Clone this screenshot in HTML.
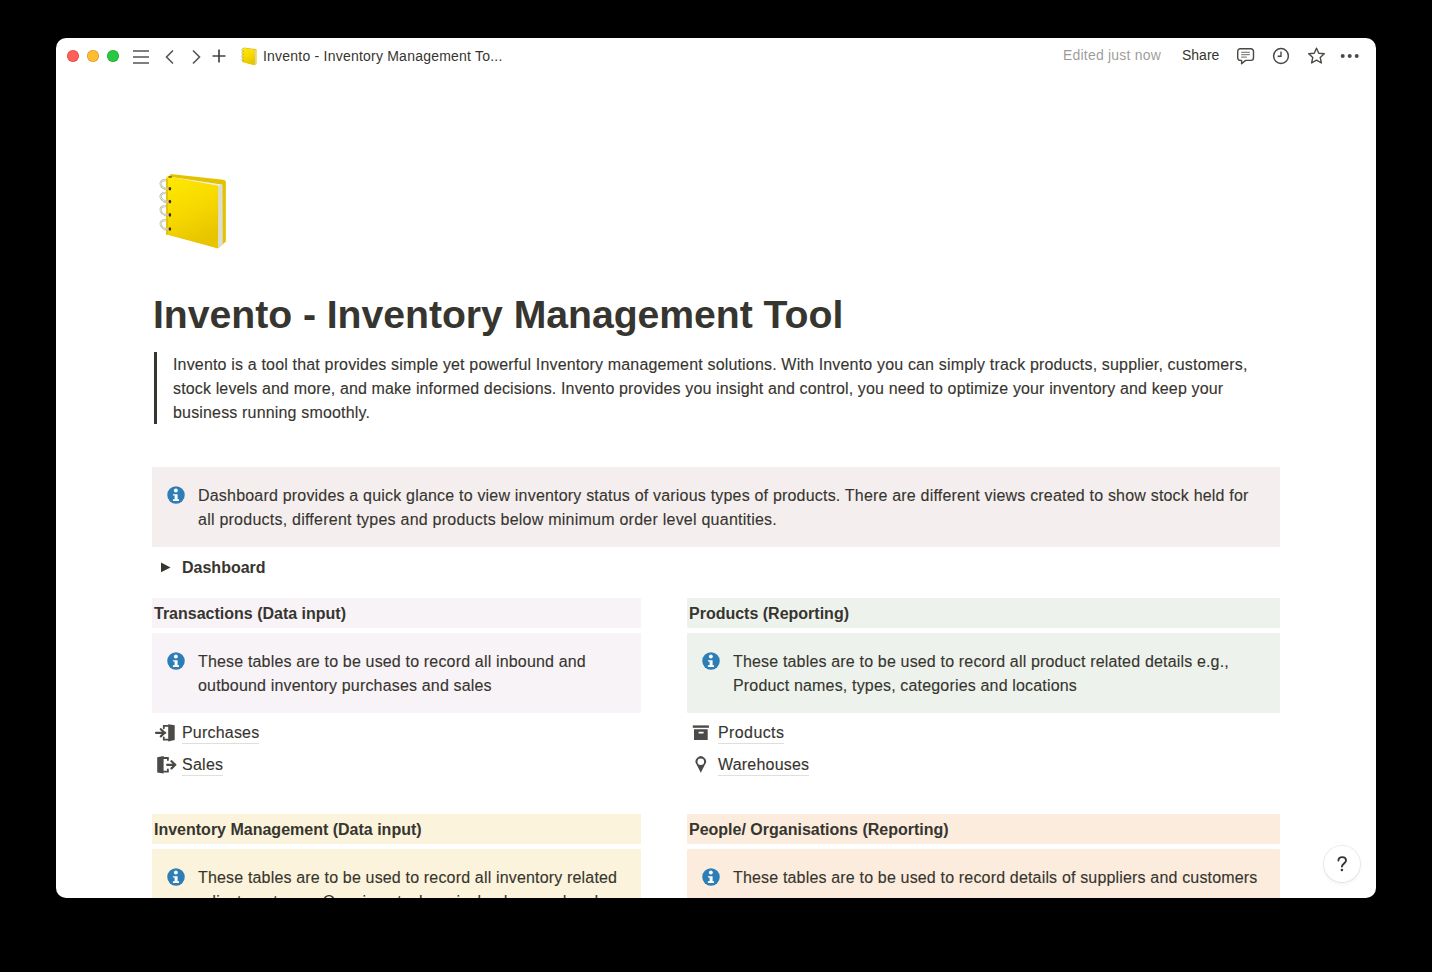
<!DOCTYPE html>
<html><head><meta charset="utf-8">
<style>
*{box-sizing:border-box;margin:0;padding:0}
html,body{width:1432px;height:972px;background:#000;overflow:hidden}
body{font-family:"Liberation Sans",sans-serif;color:rgb(55,53,47);position:relative}
.t16:not(.hd){-webkit-text-stroke:0.12px rgb(55,53,47)}
#win{position:absolute;left:56px;top:38px;width:1320px;height:860px;background:#fff;border-radius:10px;overflow:hidden}
.abs{position:absolute;white-space:nowrap}
.tl{position:absolute;top:12px;width:12px;height:12px;border-radius:50%;box-shadow:inset 0 0 0 0.6px rgba(0,0,0,0.22)}
.t16{font-size:16px;line-height:24px;letter-spacing:0.17px;padding-top:1px}
.hd{letter-spacing:0 !important}
.hd{font-weight:bold}
.callout{position:absolute;border-radius:1px}
.info{position:absolute;width:18px;height:18px}
.link{border-bottom:1px solid rgba(55,53,47,0.16);padding-bottom:2px}
</style></head>
<body>
<div id="win">
  <!-- top bar -->
  <div class="tl" style="left:11px;background:#ff5f57"></div>
  <div class="tl" style="left:31px;background:#febc2e"></div>
  <div class="tl" style="left:51px;background:#28c840"></div>
  <svg class="abs" style="left:76px;top:11px" width="20" height="16" viewBox="0 0 20 16">
    <path d="M1 2h16M1 8h16M1 14h16" stroke="#555" stroke-width="1.6" fill="none"/>
  </svg>
  <svg class="abs" style="left:107px;top:11px" width="14" height="16" viewBox="0 0 14 16">
    <path d="M10 1.5L3.5 8L10 14.5" stroke="#555" stroke-width="1.6" fill="none"/>
  </svg>
  <svg class="abs" style="left:133px;top:11px" width="14" height="16" viewBox="0 0 14 16">
    <path d="M4 1.5L10.5 8L4 14.5" stroke="#555" stroke-width="1.6" fill="none"/>
  </svg>
  <svg class="abs" style="left:155px;top:10px" width="16" height="16" viewBox="0 0 16 16">
    <path d="M8 1.5v13M1.5 8h13" stroke="#444" stroke-width="1.7" fill="none"/>
  </svg>
  <svg viewBox="0 0 80 86" width="19" height="20.8" class="abs" style="left:182.9px;top:8.3px">
<defs>
<linearGradient id="fck1" x1="0" y1="0" x2="0.35" y2="1"><stop offset="0" stop-color="#ffe900"/><stop offset="0.55" stop-color="#f7d900"/><stop offset="1" stop-color="#e8c500"/></linearGradient>
</defs>
<path d="M18.4 6 L71.5 11.8 Q73.9 12.1 73.9 14.5 L73.9 73.5 L66 80.5 L14.5 66 Z" fill="#e5c200"/>
<polygon points="17.7,8.8 70.5,16.8 70.8,76 66,80 66,18" fill="#d9ddd6"/>
<polygon points="17.7,8.8 70.5,16.8 66.2,17.9 16,9.6" fill="#eef0ea"/>
<path d="M16.4 8.4 L66.2 17.7 L66 80 L14.2 66.4 L14.2 10.6 Q14.2 8.1 16.4 8.4 Z" fill="url(#fck1)"/>
<path d="M14.2 10.6 L15.8 10.6 L15.8 66.8 L14.2 66.4 Z" fill="#e3bc00"/>
<ellipse cx="18.1" cy="8.9" rx="2" ry="1.1" fill="#6b5a10" opacity="0.8"/>
<g fill="none" stroke-linecap="round"><path d="M17.2 20.8 C8.5 22.0 5 12.3 13.4 12.0" stroke="#b8c0a6" stroke-width="2.3"/><path d="M17.2 33.6 C8.5 34.800000000000004 5 25.1 13.4 24.8" stroke="#b8c0a6" stroke-width="2.3"/><path d="M17.2 46.9 C8.5 48.1 5 38.4 13.4 38.099999999999994" stroke="#b8c0a6" stroke-width="2.3"/><path d="M17.2 61.0 C8.5 62.2 5 52.5 13.4 52.2" stroke="#b8c0a6" stroke-width="2.3"/><path d="M17.2 20.8 C8.5 22.0 5 12.3 13.4 12.0" stroke="#eef1e6" stroke-width="0.9"/><path d="M17.2 33.6 C8.5 34.800000000000004 5 25.1 13.4 24.8" stroke="#eef1e6" stroke-width="0.9"/><path d="M17.2 46.9 C8.5 48.1 5 38.4 13.4 38.099999999999994" stroke="#eef1e6" stroke-width="0.9"/><path d="M17.2 61.0 C8.5 62.2 5 52.5 13.4 52.2" stroke="#eef1e6" stroke-width="0.9"/><path d="M12.8 21.400000000000002 L17.6 20.8" stroke="#d9c48a" stroke-width="1.6"/><path d="M12.8 34.2 L17.6 33.6" stroke="#d9c48a" stroke-width="1.6"/><path d="M12.8 47.5 L17.6 46.9" stroke="#d9c48a" stroke-width="1.6"/><path d="M12.8 61.6 L17.6 61.0" stroke="#d9c48a" stroke-width="1.6"/></g>
<ellipse cx="17.9" cy="20.8" rx="1.3" ry="1.8" fill="#3a3110"/><ellipse cx="17.9" cy="33.6" rx="1.3" ry="1.8" fill="#3a3110"/><ellipse cx="17.9" cy="46.9" rx="1.3" ry="1.8" fill="#3a3110"/><ellipse cx="17.9" cy="61.0" rx="1.3" ry="1.8" fill="#3a3110"/>
</svg>
  <div class="abs" style="left:207px;top:9px;font-size:14px;line-height:18px;letter-spacing:0.22px;color:rgb(55,53,47)">Invento - Inventory Management To...</div>
  <div class="abs" style="left:1007px;top:8px;font-size:14px;line-height:18px;letter-spacing:0.2px;color:rgba(55,53,47,0.5)">Edited just now</div>
  <div class="abs" style="left:1126px;top:8px;font-size:14px;line-height:18px;color:rgb(55,53,47)">Share</div>


  <svg class="abs" style="left:1181px;top:10px" width="18" height="17" viewBox="0 0 18 17">
    <path d="M3.3 0.8h10.6a2.6 2.6 0 0 1 2.6 2.6v6.4a2.6 2.6 0 0 1-2.6 2.6H8.6L4.6 15.7V12.4H3.3A2.6 2.6 0 0 1 0.7 9.8V3.4A2.6 2.6 0 0 1 3.3 0.8Z" fill="none" stroke="#4a4945" stroke-width="1.4" stroke-linejoin="round"/>
    <path d="M4.2 4.3h8.6M4.2 6.7h8.6M4.2 9.1h5.6" stroke="#6a6965" stroke-width="1"/>
  </svg>
  <svg class="abs" style="left:1216px;top:9px" width="18" height="18" viewBox="0 0 18 18">
    <circle cx="9" cy="9" r="7.4" fill="none" stroke="#4a4945" stroke-width="1.5"/>
    <path d="M9 4.6V9.2H5.6" fill="none" stroke="#4a4945" stroke-width="1.4"/>
  </svg>
  <svg class="abs" style="left:1251px;top:9px" width="19" height="18" viewBox="0 0 19 18">
    <path d="M9.5 1.2L11.8 6.3L17.3 6.8L13.2 10.5L14.4 16L9.5 13.2L4.6 16L5.8 10.5L1.7 6.8L7.2 6.3Z" fill="none" stroke="#4a4945" stroke-width="1.4" stroke-linejoin="round"/>
  </svg>
  <svg class="abs" style="left:1284px;top:14px" width="20" height="8" viewBox="0 0 20 8">
    <circle cx="2.7" cy="4" r="2" fill="#4a4945"/><circle cx="9.7" cy="4" r="2" fill="#4a4945"/><circle cx="16.7" cy="4" r="2" fill="#4a4945"/>
  </svg>
  <div class="abs" style="left:1268px;top:808px;width:36px;height:36px;border-radius:50%;background:#fff;box-shadow:0 0 0 1px rgba(15,15,15,0.07),0 2px 4px rgba(15,15,15,0.06)"><svg width="37" height="37" viewBox="0 0 37 37" style="position:absolute;left:0;top:0"><path d="M14.4 14.6C14.4 12.5 16 11.1 18.1 11.1C20.3 11.1 22 12.5 22 14.5C22 17.1 18.5 17.8 17.9 20.5" fill="none" stroke="#37352f" stroke-width="1.9" stroke-linecap="round"/><circle cx="17.9" cy="24" r="1.3" fill="#37352f"/></svg></div>

  <!-- page -->
<svg viewBox="0 0 80 86" width="80" height="86" class="abs" style="left:96px;top:130px">
<defs>
<linearGradient id="fck2" x1="0" y1="0" x2="0.35" y2="1"><stop offset="0" stop-color="#ffe900"/><stop offset="0.55" stop-color="#f7d900"/><stop offset="1" stop-color="#e8c500"/></linearGradient>
</defs>
<path d="M18.4 6 L71.5 11.8 Q73.9 12.1 73.9 14.5 L73.9 73.5 L66 80.5 L14.5 66 Z" fill="#e5c200"/>
<polygon points="17.7,8.8 70.5,16.8 70.8,76 66,80 66,18" fill="#d9ddd6"/>
<polygon points="17.7,8.8 70.5,16.8 66.2,17.9 16,9.6" fill="#eef0ea"/>
<path d="M16.4 8.4 L66.2 17.7 L66 80 L14.2 66.4 L14.2 10.6 Q14.2 8.1 16.4 8.4 Z" fill="url(#fck2)"/>
<path d="M14.2 10.6 L15.8 10.6 L15.8 66.8 L14.2 66.4 Z" fill="#e3bc00"/>
<ellipse cx="18.1" cy="8.9" rx="2" ry="1.1" fill="#6b5a10" opacity="0.8"/>
<g fill="none" stroke-linecap="round"><path d="M17.2 20.8 C8.5 22.0 5 12.3 13.4 12.0" stroke="#b8c0a6" stroke-width="2.3"/><path d="M17.2 33.6 C8.5 34.800000000000004 5 25.1 13.4 24.8" stroke="#b8c0a6" stroke-width="2.3"/><path d="M17.2 46.9 C8.5 48.1 5 38.4 13.4 38.099999999999994" stroke="#b8c0a6" stroke-width="2.3"/><path d="M17.2 61.0 C8.5 62.2 5 52.5 13.4 52.2" stroke="#b8c0a6" stroke-width="2.3"/><path d="M17.2 20.8 C8.5 22.0 5 12.3 13.4 12.0" stroke="#eef1e6" stroke-width="0.9"/><path d="M17.2 33.6 C8.5 34.800000000000004 5 25.1 13.4 24.8" stroke="#eef1e6" stroke-width="0.9"/><path d="M17.2 46.9 C8.5 48.1 5 38.4 13.4 38.099999999999994" stroke="#eef1e6" stroke-width="0.9"/><path d="M17.2 61.0 C8.5 62.2 5 52.5 13.4 52.2" stroke="#eef1e6" stroke-width="0.9"/><path d="M12.8 21.400000000000002 L17.6 20.8" stroke="#d9c48a" stroke-width="1.6"/><path d="M12.8 34.2 L17.6 33.6" stroke="#d9c48a" stroke-width="1.6"/><path d="M12.8 47.5 L17.6 46.9" stroke="#d9c48a" stroke-width="1.6"/><path d="M12.8 61.6 L17.6 61.0" stroke="#d9c48a" stroke-width="1.6"/></g>
<ellipse cx="17.9" cy="20.8" rx="1.3" ry="1.8" fill="#3a3110"/><ellipse cx="17.9" cy="33.6" rx="1.3" ry="1.8" fill="#3a3110"/><ellipse cx="17.9" cy="46.9" rx="1.3" ry="1.8" fill="#3a3110"/><ellipse cx="17.9" cy="61.0" rx="1.3" ry="1.8" fill="#3a3110"/>
</svg>
  <div class="abs hd" style="left:97px;top:250.8px;font-size:39.2px;line-height:52px;letter-spacing:-0.04px !important">Invento - Inventory Management Tool</div>

  <div class="abs" style="left:98px;top:314px;width:3px;height:72px;background:rgb(55,53,47)"></div>
  <div class="abs t16" style="left:117px;top:314px">Invento is a tool that provides simple yet powerful Inventory management solutions. With Invento you can simply track products, supplier, customers,<br><span style="letter-spacing:0.142px">stock levels and more, and make informed decisions. Invento provides you insight and control, you need to optimize your inventory and keep your</span><br>business running smoothly.</div>

  <div class="callout" style="left:96px;top:429px;width:1128px;height:80px;background:rgb(244,239,238)"></div>
  <svg class="abs" style="left:111px;top:448px" width="18" height="18" viewBox="0 0 18 18"><circle cx="9" cy="9" r="8.75" fill="#2d7db6"/><circle cx="8.85" cy="4.5" r="1.95" fill="#fff"/><path d="M5.9 8.2H10.6V13.3H12V15H5.9V13.3H7.6V9.4H5.9Z" fill="#fff"/></svg>
  <div class="abs t16" style="left:142px;top:445px"><span style="letter-spacing:0.196px">Dashboard provides a quick glance to view inventory status of various types of products. There are different views created to show stock held for</span><br><span style="letter-spacing:0.238px">all products, different types and products below minimum order level quantities.</span></div>

  <svg class="abs" style="left:104px;top:524.2px" width="12" height="12" viewBox="0 0 12 12"><path d="M1 0.5L10.5 5.4L1 10.3Z" fill="#37352f"/></svg>
  <div class="abs t16 hd" style="left:126px;top:517px">Dashboard</div>

  <!-- left col -->
  <div class="callout" style="left:96px;top:560px;width:489px;height:30px;background:rgb(248,243,247)"></div>
  <div class="abs t16 hd" style="left:98px;top:563px">Transactions (Data input)</div>
  <div class="callout" style="left:96px;top:595px;width:489px;height:80px;background:rgb(248,243,247)"></div>
  <svg class="abs" style="left:111px;top:614px" width="18" height="18" viewBox="0 0 18 18"><circle cx="9" cy="9" r="8.75" fill="#2d7db6"/><circle cx="8.85" cy="4.5" r="1.95" fill="#fff"/><path d="M5.9 8.2H10.6V13.3H12V15H5.9V13.3H7.6V9.4H5.9Z" fill="#fff"/></svg>
  <div class="abs t16" style="left:142px;top:611px">These tables are to be used to record all inbound and<br>outbound inventory purchases and sales</div>
  <svg class="abs" style="left:96px;top:682px" width="28" height="26" viewBox="0 0 28 26"><path d="M16.2 4.3L22.7 5.3V20L16.2 21.4Z" fill="#4b4a47"/><path d="M16.2 5.9H11.8V8.3M11.8 17.4V19.7H16.2" fill="none" stroke="#4b4a47" stroke-width="1.8" stroke-linecap="round"/><path d="M4 12.8H13.2M8.8 9.2L12.6 12.8L8.8 16.4" fill="none" stroke="#4b4a47" stroke-width="2.2" stroke-linejoin="round" stroke-linecap="round"/></svg>
  <div class="abs t16" style="left:126px;top:682px"><span class="link" style="letter-spacing:0.2px">Purchases</span></div>
  <svg class="abs" style="left:96px;top:714px" width="28" height="26" viewBox="0 0 28 26"><path d="M5.2 5.2L11.6 4.1V21.4L5.2 20.5Z" fill="#4b4a47"/><path d="M11.6 6H15.9V8M15.9 17.4V19.6H11.6" fill="none" stroke="#4b4a47" stroke-width="1.8" stroke-linecap="round"/><path d="M15.1 12.8H23.2M19.5 9.2L23.3 12.8L19.5 16.4" fill="none" stroke="#4b4a47" stroke-width="2.2" stroke-linejoin="round" stroke-linecap="round"/></svg>
  <div class="abs t16" style="left:126px;top:714px"><span class="link" style="letter-spacing:0.25px">Sales</span></div>

  <!-- right col -->
  <div class="callout" style="left:631px;top:560px;width:593px;height:30px;background:rgb(237,243,236)"></div>
  <div class="abs t16 hd" style="left:633px;top:563px">Products (Reporting)</div>
  <div class="callout" style="left:631px;top:595px;width:593px;height:80px;background:rgb(237,243,236)"></div>
  <svg class="abs" style="left:646px;top:614px" width="18" height="18" viewBox="0 0 18 18"><circle cx="9" cy="9" r="8.75" fill="#2d7db6"/><circle cx="8.85" cy="4.5" r="1.95" fill="#fff"/><path d="M5.9 8.2H10.6V13.3H12V15H5.9V13.3H7.6V9.4H5.9Z" fill="#fff"/></svg>
  <div class="abs t16" style="left:677px;top:611px">These tables are to be used to record all product related details e.g.,<br>Product names, types, categories and locations</div>
  <svg class="abs" style="left:632px;top:682px" width="26" height="26" viewBox="0 0 26 26"><rect x="4.8" y="5.4" width="16.1" height="2.4" fill="#4b4a47"/><path d="M6 9.2H19.7V20H6Z M10.6 11.7V13.5H15.6V11.7Z" fill="#4b4a47" fill-rule="evenodd"/></svg>
  <div class="abs t16" style="left:662px;top:682px"><span class="link" style="letter-spacing:0.4px">Products</span></div>
  <svg class="abs" style="left:632px;top:714px" width="26" height="26" viewBox="0 0 26 26"><path d="M12.8 20.8L8.6 12.6A5.2 5.2 0 1 1 17 12.6Z" fill="#4b4a47"/><circle cx="12.8" cy="9.7" r="3.3" fill="#fff"/></svg>
  <div class="abs t16" style="left:662px;top:714px"><span class="link" style="letter-spacing:0.2px">Warehouses</span></div>

  <!-- section 2 -->
  <div class="callout" style="left:96px;top:776px;width:489px;height:30px;background:rgb(251,243,219)"></div>
  <div class="abs t16 hd" style="left:98px;top:779px">Inventory Management (Data input)</div>
  <div class="callout" style="left:96px;top:811px;width:489px;height:80px;background:rgb(251,243,219)"></div>
  <svg class="abs" style="left:111px;top:830px" width="18" height="18" viewBox="0 0 18 18"><circle cx="9" cy="9" r="8.75" fill="#2d7db6"/><circle cx="8.85" cy="4.5" r="1.95" fill="#fff"/><path d="M5.9 8.2H10.6V13.3H12V15H5.9V13.3H7.6V9.4H5.9Z" fill="#fff"/></svg>
  <div class="abs t16" style="left:142px;top:827px">These tables are to be used to record all inventory related<br>adjustments e.g. Opening stock, arrivals, damaged and</div>

  <div class="callout" style="left:631px;top:776px;width:593px;height:30px;background:rgb(251,236,221)"></div>
  <div class="abs t16 hd" style="left:633px;top:779px">People/ Organisations (Reporting)</div>
  <div class="callout" style="left:631px;top:811px;width:593px;height:80px;background:rgb(251,236,221)"></div>
  <svg class="abs" style="left:646px;top:830px" width="18" height="18" viewBox="0 0 18 18"><circle cx="9" cy="9" r="8.75" fill="#2d7db6"/><circle cx="8.85" cy="4.5" r="1.95" fill="#fff"/><path d="M5.9 8.2H10.6V13.3H12V15H5.9V13.3H7.6V9.4H5.9Z" fill="#fff"/></svg>
  <div class="abs t16" style="left:677px;top:827px">These tables are to be used to record details of suppliers and customers</div>
</div>
</body></html>
